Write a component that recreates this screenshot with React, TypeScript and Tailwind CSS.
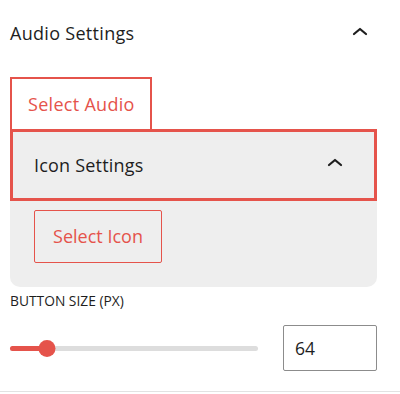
import { useState } from "react";

function Caret({ className }: { className?: string }) {
  return (
    <svg
      width="16"
      height="9"
      viewBox="0 0 16 9"
      className={className}
      fill="none"
      stroke="#1e1e1e"
      strokeWidth="2.2"
      strokeLinecap="round"
      strokeLinejoin="round"
    >
      <polyline points="2,7 8,2 14,7" />
    </svg>
  );
}

function App() {
  const [size, setSize] = useState(64);
  const pct = 15;

  return (
    <div
      className="w-[400px] h-[394px] bg-white overflow-hidden"
      style={{ fontFamily: '"Open Sans", "Noto Sans", sans-serif' }}
    >
      <div className="h-[392px] border-b border-[#e2e2e2] pl-[10px] pr-[23px] flex flex-col">
        {/* Audio Settings header */}
        <button className="h-[66px] flex items-center justify-between text-left pr-[9px]">
          <span className="text-[18px] tracking-[0.3px] text-[#1e1e1e]">Audio Settings</span>
          <Caret className="-mt-[4px]" />
        </button>

        {/* Select Audio tab */}
        <div className="mt-[11px] flex">
          <button className="w-[142px] h-[52px] border-2 border-b-0 border-[#e5534b] text-[#e5534b] text-[18px] tracking-[0.3px] text-left pl-[16px]">
            Select Audio
          </button>
        </div>

        {/* Icon Settings panel */}
        <div className="bg-[#eeeeee] rounded-b-[10px] flex flex-col">
          <button className="h-[72px] border-[3px] border-[#e5534b] flex items-center justify-between pl-[21px] pr-[31px]">
            <span className="text-[18px] tracking-[0.2px] text-[#1e1e1e]">Icon Settings</span>
            <Caret className="-mt-[6px]" />
          </button>
          <div className="pt-[9px] pb-[24px] pl-[24px]">
            <button className="w-[128px] h-[53px] border border-[#e5534b] rounded-[2px] text-[#e5534b] text-[18px]">
              Select Icon
            </button>
          </div>
        </div>

        {/* Button size */}
        <label className="mt-[4px] text-[13.8px] text-[#1e1e1e] leading-[20px]">
          BUTTON SIZE (PX)
        </label>
        <div className="mt-[14px] flex items-center justify-between">
          <div className="relative w-[248px] h-[18px] flex items-center">
            <div className="w-full h-[5px] rounded-full bg-[#dddddd]" />
            <div
              className="absolute left-0 h-[5px] rounded-full bg-[#e5534b]"
              style={{ width: `${pct}%` }}
            />
            <div
              className="absolute w-[17px] h-[17px] rounded-full bg-[#e5534b] -translate-x-1/2"
              style={{ left: `${pct}%` }}
            />
          </div>
          <input
            type="number"
            value={size}
            onChange={(e) => setSize(Number(e.target.value))}
            className="w-[94px] h-[46px] border border-[#8c8c8c] rounded-[2px] pl-[11px] text-[17.5px] text-[#1e1e1e] outline-none [appearance:textfield]"
          />
        </div>
      </div>
    </div>
  );
}

export default App;
